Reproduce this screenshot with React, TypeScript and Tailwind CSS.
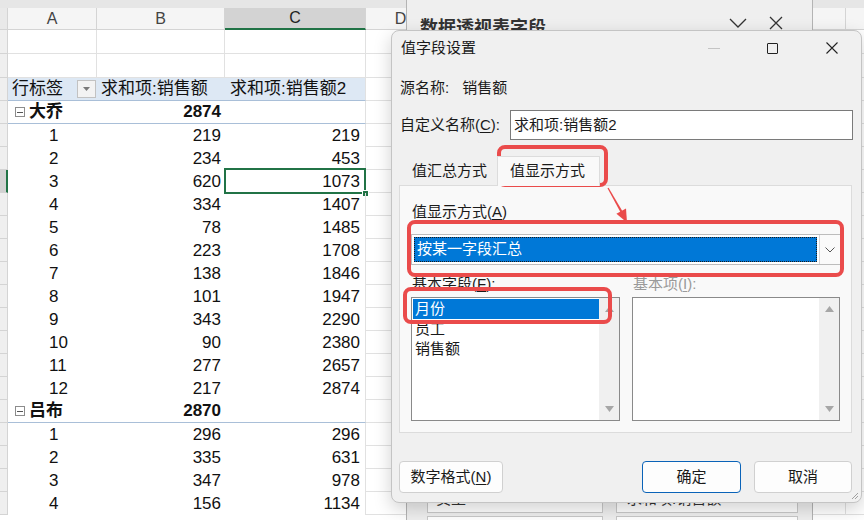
import React from "react";

const FONT = "font-['Liberation_Sans','Noto_Sans_CJK_SC',sans-serif]";

type Line = { a: string; b: string; c: string; group?: boolean; active?: boolean };

const lines: Line[] = [
  { a: "大乔", b: "2874", c: "", group: true },
  { a: "1", b: "219", c: "219" },
  { a: "2", b: "234", c: "453" },
  { a: "3", b: "620", c: "1073", active: true },
  { a: "4", b: "334", c: "1407" },
  { a: "5", b: "78", c: "1485" },
  { a: "6", b: "223", c: "1708" },
  { a: "7", b: "138", c: "1846" },
  { a: "8", b: "101", c: "1947" },
  { a: "9", b: "343", c: "2290" },
  { a: "10", b: "90", c: "2380" },
  { a: "11", b: "277", c: "2657" },
  { a: "12", b: "217", c: "2874" },
  { a: "吕布", b: "2870", c: "", group: true },
  { a: "1", b: "296", c: "296" },
  { a: "2", b: "335", c: "631" },
  { a: "3", b: "347", c: "978" },
  { a: "4", b: "156", c: "1134" },
];

function RowHead({ active }: { active?: boolean }) {
  return active ? (
    <div className="h-full w-[8px] shrink-0 border-r-2 border-b border-r-[#217346] border-b-[#d4d4d4] bg-[#d2d2d2]" />
  ) : (
    <div className="h-full w-[8px] shrink-0 border-r border-b border-[#d4d4d4] bg-[#efefef]" />
  );
}

function Tail() {
  return (
    <>
      <div className="h-full w-[68px] shrink-0 border-r border-b border-[#e1e1e1]" />
      <div className="h-full w-[100px] shrink-0 border-r border-b border-[#e1e1e1]" />
      <div className="h-full w-[100px] shrink-0 border-r border-b border-[#e1e1e1]" />
      <div className="h-full w-[100px] shrink-0 border-r border-b border-[#e1e1e1]" />
      <div className="h-full w-[112px] shrink-0 border-r border-b border-[#e1e1e1]" />
      <div className="h-full w-[100px] shrink-0 border-r border-b border-[#e1e1e1]" />
    </>
  );
}

function Sheet() {
  return (
    <div className={`flex h-[520px] w-[864px] flex-col overflow-hidden bg-white text-[17px] text-[#111] ${FONT}`}>
      <div className="h-[8px] shrink-0 bg-[#e6e6e6]" />
      {/* column letters */}
      <div className="flex h-[22px] shrink-0 text-[16px] text-[#444]">
        <div className="h-full w-[8px] shrink-0 border-r border-b border-[#d4d4d4] bg-[#e9e9e9]" />
        <div className="flex h-full w-[89px] shrink-0 items-center justify-center border-r border-b border-[#d4d4d4] bg-[#f5f5f5]">A</div>
        <div className="flex h-full w-[128px] shrink-0 items-center justify-center border-r border-b border-[#d4d4d4] bg-[#f5f5f5]">B</div>
        <div className="flex h-full w-[141px] shrink-0 items-center justify-center border-r border-b-2 border-r-[#d4d4d4] border-b-[#217346] bg-[#d3d3d3] text-[#222]">C</div>
        <div className="flex h-full w-[68px] shrink-0 items-center justify-center border-r border-b border-[#d4d4d4] bg-[#f5f5f5] pl-[2px]">D</div>
        <div className="h-full w-[100px] shrink-0 border-r border-b border-[#d4d4d4] bg-[#f5f5f5]" />
        <div className="h-full w-[100px] shrink-0 border-r border-b border-[#d4d4d4] bg-[#f5f5f5]" />
        <div className="h-full w-[100px] shrink-0 border-r border-b border-[#d4d4d4] bg-[#f5f5f5]" />
        <div className="h-full w-[112px] shrink-0 border-r border-b border-[#d4d4d4] bg-[#f5f5f5]" />
        <div className="h-full w-[100px] shrink-0 border-r border-b border-[#d4d4d4] bg-[#f5f5f5]" />
      </div>
      {[0, 1].map((i) => (
        <div key={i} className="flex h-[24px] shrink-0">
          <RowHead />
          <div className="h-full w-[89px] shrink-0 border-r border-b border-[#e1e1e1]" />
          <div className="h-full w-[128px] shrink-0 border-r border-b border-[#e1e1e1]" />
          <div className="h-full w-[141px] shrink-0 border-r border-b border-[#e1e1e1]" />
          <Tail />
        </div>
      ))}
      {/* pivot header */}
      <div className="flex h-[23px] shrink-0">
        <RowHead />
        <div className="flex h-full w-[89px] shrink-0 items-center border-b border-[#a9bfd8] bg-[#dde8f4] pl-[4px]">
          <span>行标签</span>
          <div className="ml-auto mr-[1px] flex h-[18px] w-[19px] items-center justify-center border border-[#c2c2c2] bg-[#f3f3f3]">
            <svg width="7" height="4" viewBox="0 0 7 4">
              <path d="M0 0h7L3.5 4z" fill="#7a7a7a" />
            </svg>
          </div>
        </div>
        <div className="flex h-full w-[128px] shrink-0 items-center border-b border-[#a9bfd8] bg-[#dde8f4] pl-[4px]">求和项:销售额</div>
        <div className="flex h-full w-[141px] shrink-0 items-center border-r border-b border-r-[#e1e1e1] border-b-[#a9bfd8] bg-[#dde8f4] pl-[5px]">求和项:销售额2</div>
        <Tail />
      </div>
      {lines.map((l, i) => (
        <div key={i} className="flex h-[23px] shrink-0">
          <RowHead active={l.active} />
          {l.group ? (
            <>
              <div className="flex h-full w-[89px] shrink-0 items-center border-b border-[#a9bfd8] pl-[7px] font-bold">
                <div className="mr-[4px] flex h-[10px] w-[10px] items-center justify-center border border-[#8c8c8c] bg-white">
                  <div className="h-px w-[6px] bg-[#555]" />
                </div>
                {l.a}
              </div>
              <div className="flex h-full w-[128px] shrink-0 items-center justify-end border-b border-[#a9bfd8] pr-[4px] font-bold">{l.b}</div>
              <div className="h-full w-[141px] shrink-0 border-r border-b border-r-[#e1e1e1] border-b-[#a9bfd8]" />
            </>
          ) : (
            <>
              <div className="flex h-full w-[89px] shrink-0 items-center pl-[41px]">{l.a}</div>
              <div className="flex h-full w-[128px] shrink-0 items-center justify-end pr-[4px]">{l.b}</div>
              <div className="relative flex h-full w-[141px] shrink-0 items-center justify-end border-r border-[#e1e1e1] pr-[5px]">
                {l.c}
                {l.active && (
                  <>
                    <div className="absolute -left-px -top-[2px] bottom-[-1px] right-[-1px] border-2 border-[#217346]" />
                    <div className="absolute -right-[4px] -bottom-[4px] h-[7px] w-[7px] border border-white bg-[#217346]" />
                  </>
                )}
              </div>
            </>
          )}
          <Tail />
        </div>
      ))}
    </div>
  );
}

function PivotPane() {
  return (
    <div className={`absolute left-[406px] top-0 flex h-[520px] w-[407px] flex-col overflow-hidden border-x border-x-[#b4b4b4] bg-[#efefef] ${FONT}`}>
      <div className="flex h-[46px] shrink-0 items-center pl-[13px]">
        <span className="pt-[10px] text-[18px] font-bold text-[#333]">数据透视表字段</span>
        <svg className="ml-[183px]" width="18" height="10" viewBox="0 0 18 10">
          <path d="M1 1l8 8 8-8" fill="none" stroke="#333" strokeWidth="1.3" />
        </svg>
        <svg className="ml-[22px]" width="14" height="14" viewBox="0 0 14 14">
          <path d="M1 1l12 12M13 1L1 13" stroke="#333" strokeWidth="1.3" />
        </svg>
      </div>
      <div className="mt-[440px] flex gap-[13px] pl-[20px] text-[15px] text-[#333]">
        <div className="flex w-[176px] flex-col gap-[3px]">
          <div className="flex h-[27px] items-center border border-[#c9c9c9] bg-white pl-[8px]">员工</div>
          <div className="h-[24px] border border-[#c9c9c9] bg-white" />
        </div>
        <div className="flex w-[182px] flex-col gap-[3px]">
          <div className="flex h-[27px] items-center border border-[#c9c9c9] bg-white pl-[10px]">求和项:销售额</div>
          <div className="h-[24px] border border-[#c9c9c9] bg-white" />
        </div>
      </div>
    </div>
  );
}

function Arrows() {
  return (
    <div className="flex w-[20px] flex-col items-center justify-between bg-[#f0f0f0] py-[8px]">
      <svg width="9" height="6" viewBox="0 0 9 6">
        <path d="M4.5 0L9 6H0z" fill="#a6a6a6" />
      </svg>
      <svg width="9" height="6" viewBox="0 0 9 6">
        <path d="M0 0h9L4.5 6z" fill="#a6a6a6" />
      </svg>
    </div>
  );
}

function Dialog() {
  return (
    <div className={`absolute left-[391px] top-[30px] flex h-[473px] w-[471px] flex-col rounded-[8px] border border-[#c4c4c4] bg-[#f0f0f0] text-[15px] text-[#1a1a1a] shadow-[0_6px_18px_rgba(0,0,0,0.18)] ${FONT}`}>
      <div className="flex h-[34px] shrink-0 items-center">
        <span className="flex-1 pl-[9px]">值字段设置</span>
        <div className="flex h-full w-[59px] items-center justify-center">
          <div className="h-px w-[12px] bg-[#c4c4c4]" />
        </div>
        <div className="flex h-full w-[59px] items-center justify-center">
          <div className="h-[11px] w-[11px] rounded-[1px] border border-[#222]" />
        </div>
        <div className="flex h-full w-[59px] items-center justify-center">
          <svg width="12" height="12" viewBox="0 0 12 12">
            <path d="M0.5 0.5l11 11M11.5 0.5l-11 11" stroke="#222" strokeWidth="1.1" />
          </svg>
        </div>
      </div>
      <div className="flex flex-1 flex-col pl-[7px] pr-[9px]">
        <div className="mt-[12px] flex h-[22px] items-center pl-[1px]">
          <span>源名称:</span>
          <span className="ml-[13px]">销售额</span>
        </div>
        <div className="mt-[11px] flex h-[30px] items-center">
          <span className="w-[111px] shrink-0 pl-[1px]">
            自定义名称(<span className="underline underline-offset-2">C</span>):
          </span>
          <div className="flex h-[30px] w-[343px] shrink-0 items-center border border-[#7a7a7a] bg-white pl-[3px]">求和项:销售额2</div>
        </div>
        <div className="mt-[16px] flex h-[29px] items-end">
          <div className="flex h-[27px] w-[98px] items-center pl-[13px]">值汇总方式</div>
          <div className="relative z-10 -mb-px flex h-[30px] w-[103px] items-center border border-b-0 border-[#dcdcdc] bg-[#f9f9f9] pl-[12px]">值显示方式</div>
        </div>
        <div className="flex h-[248px] flex-col border border-[#dcdcdc] bg-[#f9f9f9] px-[11px]">
          <div className="mt-[15px] flex h-[22px] items-center pl-[1px]">
            值显示方式(<span className="underline underline-offset-2">A</span>)
          </div>
          <div className="mt-[11px] flex h-[31px] w-[430px] border border-[#bcbcbc] bg-white">
            <div className="flex flex-1 p-[2px]">
              <div className="flex flex-1 items-center border border-dotted border-[#1a1a1a] bg-[#0078d7] pl-[2px] text-white">按某一字段汇总</div>
            </div>
            <div className="flex w-[21px] items-center justify-center border-l border-[#d6d6d6] bg-[#fafafa]">
              <svg width="10" height="6" viewBox="0 0 10 6">
                <path d="M0.5 0.5L5 5l4.5-4.5" fill="none" stroke="#555" strokeWidth="1" />
              </svg>
            </div>
          </div>
          <div className="mt-[8px] flex h-[22px] items-center">
            <span className="w-[222px] pl-[1px]">
              基本字段(<span className="underline underline-offset-2">F</span>):
            </span>
            <span className="text-[#9a9a9a]">
              基本项(<span className="underline underline-offset-2">I</span>):
            </span>
          </div>
          <div className="mt-[2px] flex gap-[12px]">
            <div className="flex h-[124px] w-[210px] border border-[#8a8a8a] bg-white">
              <div className="flex flex-1 flex-col pt-[1px] pl-[1px]">
                <div className="flex h-[20px] items-center bg-[#0078d7] pl-[2px] text-white">月份</div>
                <div className="flex h-[20px] items-center pl-[2px]">员工</div>
                <div className="flex h-[20px] items-center pl-[2px]">销售额</div>
              </div>
              <Arrows />
            </div>
            <div className="flex h-[124px] w-[209px] border border-[#8a8a8a] bg-white">
              <div className="flex-1" />
              <Arrows />
            </div>
          </div>
        </div>
        <div className="mt-[28px] flex h-[32px]">
          <div className="flex w-[104px] items-center justify-center rounded-[4px] border border-[#d0d0d0] bg-[#fdfdfd]">
            数字格式(<span className="underline underline-offset-2">N</span>)
          </div>
          <div className="ml-auto flex w-[99px] items-center justify-center rounded-[4px] border border-[#0a63b8] bg-[#fdfdfd]">确定</div>
          <div className="ml-[13px] flex w-[98px] items-center justify-center rounded-[4px] border border-[#d0d0d0] bg-[#fdfdfd]">取消</div>
        </div>
      </div>
      <svg className="absolute bottom-[2px] right-[2px]" width="8" height="8" viewBox="0 0 8 8">
        <path d="M7 1L1 7M7 4L4 7" stroke="#a0a0a0" strokeWidth="1" />
      </svg>
    </div>
  );
}

function Marks() {
  return (
    <>
      <div className="absolute left-[497px] top-[145px] h-[42px] w-[111px] rounded-[8px] border-4 border-[#ea4b4b]" />
      <div className="absolute left-[407px] top-[220px] h-[57px] w-[437px] rounded-[8px] border-4 border-[#ea4b4b]" />
      <div className="absolute left-[403px] top-[287px] h-[37px] w-[209px] rounded-[8px] border-4 border-[#ea4b4b]" />
      <svg className="absolute left-[600px] top-[184px]" width="36" height="42" viewBox="0 0 36 42">
        <polygon points="7.5,4.2 8.6,3.7 22.6,27.4 20.6,28.4" fill="#ea4b4b" />
        <polygon points="27,38.5 26,24.6 16.4,29.8" fill="#ea4b4b" />
      </svg>
    </>
  );
}

export default function App() {
  return (
    <div className="relative h-[520px] w-[864px] overflow-hidden">
      <Sheet />
      <PivotPane />
      <Dialog />
      <Marks />
    </div>
  );
}
